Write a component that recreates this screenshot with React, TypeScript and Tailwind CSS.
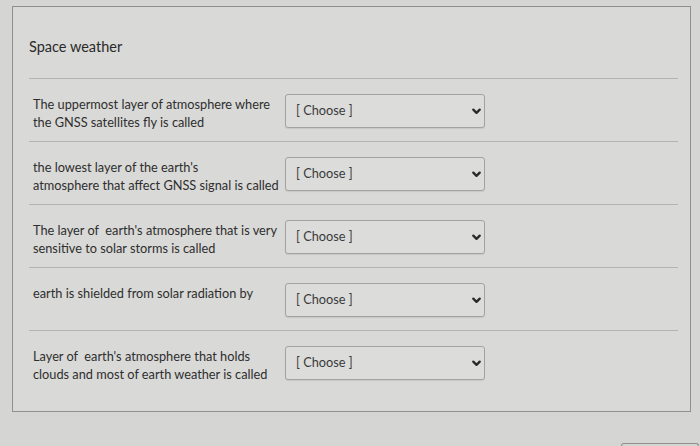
import React from "react";

const rows = [
  ["The uppermost layer of atmosphere where", "the GNSS satellites fly is called"],
  ["the lowest layer of the earth's", "atmosphere that affect GNSS signal is called"],
  ["The layer of  earth's atmosphere that is very", "sensitive to solar storms is called"],
  ["earth is shielded from solar radiation by"],
  ["Layer of  earth's atmosphere that holds", "clouds and most of earth weather is called"],
];

function Chevron() {
  return (
    <svg width="9" height="7" viewBox="0 0 9 7" className="text-[#2a2a2a]">
      <polyline points="1.3,1.6 4.5,4.9 7.7,1.6" fill="none" stroke="currentColor" strokeWidth="2.3" strokeLinecap="round" strokeLinejoin="round" />
    </svg>
  );
}

function ChooseBox() {
  return (
    <div className="ml-auto mr-[193px] flex h-[34px] w-[200px] shrink-0 items-center justify-between rounded-[3px] border border-[#a3a3a1] bg-[#dcdcda] pl-[10px] pr-[3px] shadow-[0_1px_1px_rgba(0,0,0,0.08)]">
      <span className="text-[12.75px] text-[#3a3a3a] whitespace-pre">[ Choose ]</span>
      <Chevron />
    </div>
  );
}

export default function App() {
  return (
    <div className="h-[446px] w-[700px] overflow-hidden bg-[#d5d5d3] pl-[12px] pr-[9px] pt-[6px] font-['Lato','Noto_Sans',sans-serif] text-[#2e2e2e]">
      <div className="h-[406px] border border-[#8f8f8d] bg-[#d9d9d7] pl-[16px] pr-[12px] pt-[30px]">
        <h2 className="text-[14.5px] leading-[20px] text-[#2a2a2a]">Space weather</h2>
        <div className="mt-[21px]">
          {rows.map((lines, i) => (
            <div key={i} className="flex h-[63px] items-start border-t border-[#b3b3b1] pl-[4px] pt-[15px]">
              <div className="w-[250px] pt-[1px] text-[12.75px] leading-[18px]">
                {lines.map((l) => (
                  <div key={l} className="whitespace-pre">{l}</div>
                ))}
              </div>
              <ChooseBox />
            </div>
          ))}
        </div>
      </div>
      <div className="ml-auto mr-[-8px] mt-[31px] h-[6px] w-[78px] rounded-t-[3px] border-x border-t border-[#8f8f8d]" />
    </div>
  );
}
